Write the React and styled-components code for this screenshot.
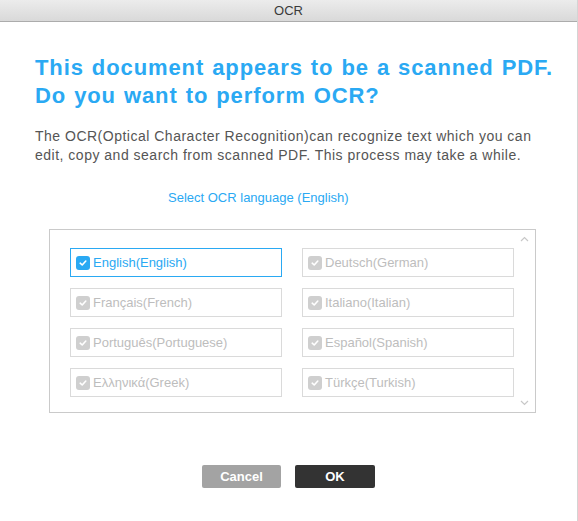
import React from "react";
import styled, { createGlobalStyle } from "styled-components";

const Global = createGlobalStyle`
  html, body { margin: 0; padding: 0; background: #fff; }
  body { font-family: "Liberation Sans", Arial, sans-serif; }
  * { box-sizing: border-box; }
`;

const Window = styled.div`
  width: 578px;
  height: 521px;
  background: #fff;
  display: flex;
  flex-direction: column;
  border-right: 1px solid #d4d4d4;
`;

const TitleBar = styled.div`
  height: 22px;
  flex: none;
  background: linear-gradient(#ececec, #d9d9d9);
  border-bottom: 1px solid #acacac;
  display: flex;
  align-items: center;
  justify-content: center;
  font-size: 13px;
  color: #3a3a3a;
`;

const Content = styled.div`
  display: flex;
  flex-direction: column;
  padding: 0 0 0 35px;
`;

const Heading = styled.h1`
  margin: 32px 0 0 0;
  font-size: 22px;
  line-height: 28px;
  font-weight: bold;
  letter-spacing: 0.9px;
  word-spacing: 1px;
  color: #2aa9f3;
`;

const Para = styled.p`
  margin: 17px 0 0 0;
  font-size: 14px;
  line-height: 19px;
  letter-spacing: 0.5px;
  color: #555;
`;

const SelectLabel = styled.div`
  margin: 25px 0 0 133px;
  font-size: 13px;
  color: #2aa9f3;
`;

const ListBox = styled.div`
  position: relative;
  margin: 24px 0 0 14px;
  width: 487px;
  height: 184px;
  border: 1px solid #cacaca;
  padding: 18px 0 0 20px;
`;

const Grid = styled.div`
  display: grid;
  grid-template-columns: 212px 212px;
  grid-auto-rows: 29px;
  column-gap: 20px;
  row-gap: 11px;
`;

const Item = styled.div`
  display: flex;
  align-items: center;
  gap: 3px;
  padding-left: 5px;
  border: 1px solid ${(p) => (p.$active ? "#2aa9f3" : "#dadada")};
  color: ${(p) => (p.$active ? "#2aa9f3" : "#bdbdbd")};
  font-size: 13px;
`;

const Check = styled.span`
  width: 14px;
  height: 14px;
  border-radius: 3px;
  background: ${(p) => (p.$active ? "#2aa9f3" : "#cfcfcf")};
  display: flex;
  align-items: center;
  justify-content: center;
  flex: none;
`;

const Arrow = styled.svg`
  position: absolute;
  right: 6px;
  ${(p) => (p.$up ? "top: 6px;" : "bottom: 6px;")}
`;

const Buttons = styled.div`
  display: flex;
  justify-content: center;
  gap: 14px;
  margin-top: 52px;
`;

const Button = styled.button`
  width: ${(p) => (p.$primary ? "80px" : "79px")};
  height: 23px;
  border: none;
  border-radius: 2px;
  background: ${(p) => (p.$primary ? "#333" : "#a3a3a3")};
  color: #fff;
  font-family: "Liberation Sans", Arial, sans-serif;
  font-size: 13px;
  font-weight: bold;
  padding: 0;
`;

const langs = [
  ["English(English)", true],
  ["Deutsch(German)"],
  ["Français(French)"],
  ["Italiano(Italian)"],
  ["Português(Portuguese)"],
  ["Español(Spanish)"],
  ["Ελληνικά(Greek)"],
  ["Türkçe(Turkish)"],
];

function CheckMark() {
  return (
    <svg width="10" height="10" viewBox="0 0 10 10">
      <path d="M2.2 5.2 L4.2 7 L7.8 3" fill="none" stroke="#fff" strokeWidth="1.6" strokeLinecap="round" strokeLinejoin="round" />
    </svg>
  );
}

export default function App() {
  return (
    <>
      <Global />
      <Window>
        <TitleBar>OCR</TitleBar>
        <Content>
          <Heading>
            This document appears to be a scanned PDF.
            <br />
            Do you want to perform OCR?
          </Heading>
          <Para>
            The OCR(Optical Character Recognition)can recognize text which you can
            <br />
            edit, copy and search from scanned PDF. This process may take a while.
          </Para>
          <SelectLabel>Select OCR language (English)</SelectLabel>
          <ListBox>
            <Arrow $up width="9" height="6" viewBox="0 0 9 6">
              <path d="M1 5 L4.5 1.5 L8 5" fill="none" stroke="#c8c8c8" strokeWidth="1.2" />
            </Arrow>
            <Grid>
              {langs.map(([name, active]) => (
                <Item key={name} $active={active}>
                  <Check $active={active}>
                    <CheckMark />
                  </Check>
                  {name}
                </Item>
              ))}
            </Grid>
            <Arrow width="9" height="6" viewBox="0 0 9 6">
              <path d="M1 1 L4.5 4.5 L8 1" fill="none" stroke="#c8c8c8" strokeWidth="1.2" />
            </Arrow>
          </ListBox>
        </Content>
        <Buttons>
          <Button>Cancel</Button>
          <Button $primary>OK</Button>
        </Buttons>
      </Window>
    </>
  );
}
